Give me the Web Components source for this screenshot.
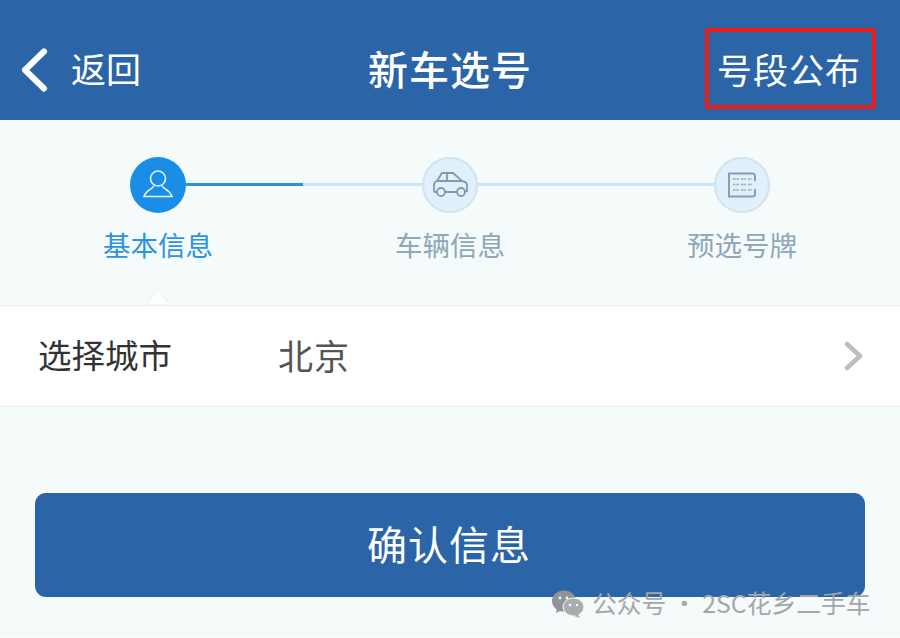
<!DOCTYPE html>
<html lang="zh-CN">
<head>
<meta charset="utf-8">
<title>新车选号</title>
<style>
html,body{margin:0;padding:0;}
body{width:900px;height:638px;overflow:hidden;background:#f5fafb;font-family:"Noto Sans CJK SC","Liberation Sans",sans-serif;}
</style>
</head>
<body>
<app-screen>
  <top-bar title="新车选号" back="返回" action="号段公布"></top-bar>
  <step-row></step-row>
  <city-row label="选择城市" value="北京"></city-row>
  <confirm-button>确认信息</confirm-button>
</app-screen>
<script>
class AppScreen extends HTMLElement {
  constructor() {
    super();
    this.attachShadow({ mode: 'open' });
    this.shadowRoot.innerHTML = `
<style>
:host{display:block;position:relative;width:900px;height:638px;overflow:hidden;background:#f5fafb;color:#333;}
.mark{position:absolute;left:552px;top:585px;display:flex;align-items:center;gap:7px;height:34px;color:#a3a7a8;font-size:24.800px;line-height:34px;white-space:nowrap;}
.mark svg{display:block;margin-top:4px;}
.foot{position:absolute;left:0;right:0;top:633px;height:1px;background:#f0f3f4;}
</style>
<slot></slot>
<div class="foot"></div>
<div class="mark">
  <svg width="33" height="28" viewBox="0 0 33 28">
    <ellipse cx="12" cy="11" rx="12" ry="10.500" fill="#8e9498"/>
    <path d="M5 18l-1 5 6-3z" fill="#8e9498"/>
    <ellipse cx="21.500" cy="17" rx="10.500" ry="9" fill="#a9adae" stroke="#f5fafb" stroke-width="1"/>
    <path d="M26 24l2 4-6-2z" fill="#a9adae"/>
    <circle cx="8" cy="8" r="1.400" fill="#f5fafb"/><circle cx="15" cy="8" r="1.400" fill="#f5fafb"/>
    <circle cx="18" cy="15" r="1.300" fill="#f5fafb"/><circle cx="25" cy="15" r="1.300" fill="#f5fafb"/>
  </svg>
  <span>公众号 · 2SC花乡二手车</span>
</div>`;
  }
}
customElements.define('app-screen', AppScreen);

class TopBar extends HTMLElement {
  constructor() {
    super();
    this.attachShadow({ mode: 'open' });
  }
  connectedCallback() {
    this.shadowRoot.innerHTML = `
<style>
:host{display:grid;grid-template-columns:1fr auto 1fr;align-items:center;height:120px;background:#2b65a7;color:#fff;box-sizing:border-box;padding:16px 24px 0 20px;}
.back{display:flex;align-items:center;gap:21px;font-size:35px;line-height:1;}
.back svg{display:block;margin-top:3px;}
.back span{margin-top:-2px;}
h1{margin:0 0 0 4px;font-size:40px;font-weight:500;letter-spacing:1px;line-height:1;}
.action{justify-self:end;box-sizing:border-box;width:171px;height:81px;border:4px solid #ea1c1c;border-radius:3px;display:flex;align-items:center;justify-content:center;font-size:35px;letter-spacing:1px;white-space:nowrap;}
.action span{margin-right:3px;}
</style>
<div class="back">
  <svg width="30" height="46" viewBox="0 0 30 46"><path d="M24 4.500L5 23l19 18.500" fill="none" stroke="#fff" stroke-width="6" stroke-linecap="round" stroke-linejoin="round"/></svg>
  <span>${this.getAttribute('back')}</span>
</div>
<h1>${this.getAttribute('title')}</h1>
<div class="action"><span>${this.getAttribute('action')}</span></div>`;
  }
}
customElements.define('top-bar', TopBar);

const stepIcons = {
  user: `<svg width="32" height="32" viewBox="0 0 32 32" fill="none" stroke="#e3f2fd" stroke-width="1.600"><circle cx="16" cy="9.500" r="7.500"/><path d="M12 16.500c-.5 3.500-8 4-10 11h28c-2-7-9.500-7.500-10-11"/></svg>`,
  car: `<svg width="36" height="28" viewBox="0 0 36 28" fill="none" stroke="#7f9bb0" stroke-width="1.800"><path d="M5 21H3q-1 0-1-2v-5q0-3 3-4l5-8h11l9 8q5 1 5 4v6h-2"/><path d="M13 21h12M5 10h25M15 2v8"/><circle cx="9" cy="21" r="4"/><circle cx="29" cy="21" r="4"/></svg>`,
  plate: `<svg width="30" height="26" viewBox="0 0 30 26" fill="none" stroke="#86a0b3" stroke-width="2"><path d="M28 9V4c0-1.500-1-2.500-2.500-2.500H2V24.500h23.500c1.500 0 2.500-1 2.500-2.500v-5"/><path d="M6 7h6m2 0h5m2 0h4M6 12.500h6m2 0h5m2 0h4M6 18h6m2 0h5m2 0h4" stroke-width="1.400" stroke="#94acbd" stroke-dasharray="2.500 .8"/></svg>`
};

class StepItem extends HTMLElement {
  constructor() {
    super();
    this.attachShadow({ mode: 'open' });
  }
  connectedCallback() {
    const active = this.hasAttribute('active');
    this.shadowRoot.innerHTML = `
<style>
:host{display:flex;flex-direction:column;align-items:center;width:120px;position:relative;z-index:1;}
.dot{box-sizing:border-box;width:56px;height:56px;border-radius:50%;display:flex;align-items:center;justify-content:center;background:${active ? '#1a8ee6' : '#e1f0fb'};border:${active ? '0' : '2px solid #cfe3f1'};}
.dot svg{display:block;}
.txt{margin-top:14px;font-size:27.500px;line-height:34px;white-space:nowrap;color:${active ? '#2b93e0' : '#8fa7b8'};}
</style>
<div class="dot">${stepIcons[this.getAttribute('icon')]}</div>
<div class="txt"><slot></slot></div>`;
  }
}
customElements.define('step-item', StepItem);

class StepRow extends HTMLElement {
  constructor() {
    super();
    this.attachShadow({ mode: 'open' });
    this.shadowRoot.innerHTML = `
<style>
:host{display:block;position:relative;height:185px;box-sizing:border-box;padding-top:37px;}
.items{display:flex;justify-content:space-between;padding:0 98px;}
.track{position:absolute;left:158px;top:63px;width:584px;height:3px;background:#c9e5f7;}
.done{position:absolute;left:158px;top:63px;width:145px;height:3px;background:#2a90e0;}
.notch{position:absolute;left:146px;bottom:0;width:24px;height:17px;}
.notch svg{display:block;}
</style>
<div class="track"></div><div class="done"></div>
<div class="items">
  <step-item icon="user" active>基本信息</step-item>
  <step-item icon="car">车辆信息</step-item>
  <step-item icon="plate">预选号牌</step-item>
</div>
<div class="notch"><svg width="24" height="17" viewBox="0 0 24 17"><path d="M0 17L12 1l12 16z" fill="#fff" stroke="#e9eef0"/></svg></div>`;
  }
}
customElements.define('step-row', StepRow);

class CityRow extends HTMLElement {
  constructor() {
    super();
    this.attachShadow({ mode: 'open' });
  }
  connectedCallback() {
    this.shadowRoot.innerHTML = `
<style>
:host{display:flex;align-items:center;box-sizing:border-box;height:102px;background:#fff;border-top:1px solid #ebeeef;border-bottom:1px solid #ebeeef;padding:0 36px 0 38px;}
.label{width:240px;font-size:33.500px;color:#333;line-height:1;white-space:nowrap;margin-top:-4px;}
.value{flex:1;font-size:35px;color:#555;line-height:1;letter-spacing:1px;margin-top:-4px;}
svg{display:block;}
</style>
<span class="label">${this.getAttribute('label')}</span>
<span class="value">${this.getAttribute('value')}</span>
<svg width="20" height="30" viewBox="0 0 20 30"><path d="M3 3l13 12L3 27" fill="none" stroke="#bdbdbd" stroke-width="4.500" stroke-linecap="round" stroke-linejoin="round"/></svg>`;
  }
}
customElements.define('city-row', CityRow);

class ConfirmButton extends HTMLElement {
  constructor() {
    super();
    this.attachShadow({ mode: 'open' });
    this.shadowRoot.innerHTML = `
<style>
:host{display:flex;align-items:center;justify-content:center;box-sizing:border-box;width:830px;height:104px;margin:86px 0 0 35px;padding:0 2px 4px 0;border-radius:11px;background:#2b65a7;color:#fff;font-size:40px;letter-spacing:1px;line-height:1;}
</style>
<slot></slot>`;
  }
}
customElements.define('confirm-button', ConfirmButton);
</script>
</body>
</html>
